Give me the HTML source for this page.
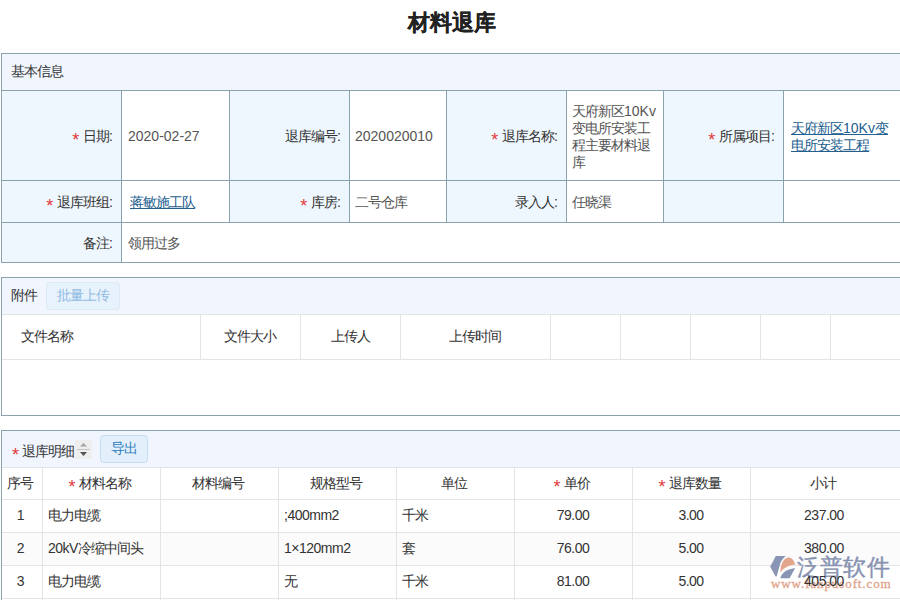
<!DOCTYPE html>
<html><head><meta charset="utf-8">
<style>
*{box-sizing:border-box;margin:0;padding:0}
html,body{width:900px;height:600px;overflow:hidden;background:#fff}
body{font-family:"Liberation Sans",sans-serif;font-size:14px;letter-spacing:-1px;color:#333;position:relative}
.title{position:absolute;left:1px;width:902px;top:8px;text-align:center;font-size:22px;letter-spacing:0;font-weight:bold;color:#222;line-height:30px;-webkit-text-stroke:0.2px #222}
.t{position:absolute;white-space:nowrap;line-height:17px}
.r{color:#e2393b;letter-spacing:0;font-size:18px;line-height:0;position:relative;top:5px;margin-right:1px}
.l{font-size:14px;letter-spacing:0}
.v{color:#555}
.tb{z-index:2}
.tb .l{font-size:14px;letter-spacing:-0.5px}
.lnk{color:#236090;text-decoration:underline}
.btn{position:absolute;border:1px solid #c5ddf1;background:#e3effb;color:#2d7dc0;border-radius:4px;text-align:center;line-height:24px}
.btn.dis{border-color:#d9e9f6;background:#e8f2fc;color:#92bde3}
.sort{position:absolute;background:#eeeeee}
.wm1{position:absolute;left:797px;top:551px;font-size:23px;line-height:32px;letter-spacing:0.2px;color:#8792b1;-webkit-text-stroke:0.4px #8792b1}
.wm2{position:absolute;left:771px;top:576px;font-family:"Liberation Serif",serif;font-size:13px;letter-spacing:0.9px;line-height:16px;color:#e0a38b;-webkit-text-stroke:0.3px #e0a38b}
</style></head><body>
<div class="title">材料退库</div>
<div style="position:absolute;left:1px;top:53px;width:1000px;height:37px;background:#f0f5fe;"></div>
<div style="position:absolute;left:1px;top:53px;width:1000px;height:1px;background:#8aa2ad;"></div>
<div style="position:absolute;left:1px;top:53px;width:1px;height:210px;background:#8aa2ad;"></div>
<div style="position:absolute;left:2px;top:91px;width:119px;height:171px;background:#eff7fe;"></div>
<div style="position:absolute;left:230px;top:91px;width:119px;height:89px;background:#eff7fe;"></div>
<div style="position:absolute;left:230px;top:181px;width:119px;height:41px;background:#eff7fe;"></div>
<div style="position:absolute;left:447px;top:91px;width:119px;height:89px;background:#eff7fe;"></div>
<div style="position:absolute;left:447px;top:181px;width:119px;height:41px;background:#eff7fe;"></div>
<div style="position:absolute;left:664px;top:91px;width:119px;height:89px;background:#eff7fe;"></div>
<div style="position:absolute;left:664px;top:181px;width:119px;height:41px;background:#eff7fe;"></div>
<div style="position:absolute;left:1px;top:90px;width:1000px;height:1px;background:#8aa2ad;"></div>
<div style="position:absolute;left:1px;top:180px;width:1000px;height:1px;background:#8aa2ad;"></div>
<div style="position:absolute;left:1px;top:222px;width:1000px;height:1px;background:#8aa2ad;"></div>
<div style="position:absolute;left:1px;top:262px;width:1000px;height:1px;background:#8aa2ad;"></div>
<div style="position:absolute;left:121px;top:90px;width:1px;height:172px;background:#8aa2ad;"></div>
<div style="position:absolute;left:229px;top:90px;width:1px;height:132px;background:#8aa2ad;"></div>
<div style="position:absolute;left:349px;top:90px;width:1px;height:132px;background:#8aa2ad;"></div>
<div style="position:absolute;left:446px;top:90px;width:1px;height:132px;background:#8aa2ad;"></div>
<div style="position:absolute;left:566px;top:90px;width:1px;height:132px;background:#8aa2ad;"></div>
<div style="position:absolute;left:663px;top:90px;width:1px;height:132px;background:#8aa2ad;"></div>
<div style="position:absolute;left:783px;top:90px;width:1px;height:132px;background:#8aa2ad;"></div>
<div class="t " style="left:11px;top:63px;">基本信息</div>
<div class="t " style="left:0px;top:128px;width:113px;text-align:right"><span class="r">*</span> 日期<span class="l">:</span></div>
<div class="t v" style="left:128px;top:128px;"><span class="l">2020-02-27</span></div>
<div class="t " style="left:229px;top:128px;width:112px;text-align:right">退库编号<span class="l">:</span></div>
<div class="t v" style="left:355px;top:128px;"><span class="l">2020020010</span></div>
<div class="t " style="left:446px;top:128px;width:112px;text-align:right"><span class="r">*</span> 退库名称<span class="l">:</span></div>
<div class="t v" style="left:572px;top:103px;line-height:17.1px">天府新区<span class="l">10Kv</span><br>变电所安装工<br>程主要材料退<br>库</div>
<div class="t " style="left:663px;top:128px;width:112px;text-align:right"><span class="r">*</span> 所属项目<span class="l">:</span></div>
<div class="t lnk" style="left:791px;top:120px;line-height:17px">天府新区<span class="l">10Kv</span>变<br>电所安装工程</div>
<div class="t " style="left:0px;top:194px;width:113px;text-align:right"><span class="r">*</span> 退库班组<span class="l">:</span></div>
<div class="t lnk" style="left:130px;top:194px;">蒋敏施工队</div>
<div class="t " style="left:229px;top:194px;width:112px;text-align:right"><span class="r">*</span> 库房<span class="l">:</span></div>
<div class="t v" style="left:355px;top:194px;">二号仓库</div>
<div class="t " style="left:446px;top:194px;width:112px;text-align:right">录入人<span class="l">:</span></div>
<div class="t v" style="left:572px;top:194px;">任晓渠</div>
<div class="t " style="left:0px;top:235px;width:113px;text-align:right">备注<span class="l">:</span></div>
<div class="t v" style="left:128px;top:235px;">领用过多</div>
<div style="position:absolute;left:1px;top:277px;width:1000px;height:37px;background:#f0f5fe;"></div>
<div style="position:absolute;left:1px;top:277px;width:1000px;height:1px;background:#8aa2ad;"></div>
<div style="position:absolute;left:1px;top:277px;width:1px;height:139px;background:#8aa2ad;"></div>
<div style="position:absolute;left:1px;top:415px;width:1000px;height:1px;background:#8aa2ad;"></div>
<div style="position:absolute;left:2px;top:314px;width:1000px;height:1px;background:#e4e4e4;"></div>
<div style="position:absolute;left:2px;top:359px;width:1000px;height:1px;background:#e4e4e4;"></div>
<div style="position:absolute;left:200px;top:314px;width:1px;height:45px;background:#e4e4e4;"></div>
<div style="position:absolute;left:300px;top:314px;width:1px;height:45px;background:#e4e4e4;"></div>
<div style="position:absolute;left:400px;top:314px;width:1px;height:45px;background:#e4e4e4;"></div>
<div style="position:absolute;left:550px;top:314px;width:1px;height:45px;background:#e4e4e4;"></div>
<div style="position:absolute;left:620px;top:314px;width:1px;height:45px;background:#e4e4e4;"></div>
<div style="position:absolute;left:690px;top:314px;width:1px;height:45px;background:#e4e4e4;"></div>
<div style="position:absolute;left:760px;top:314px;width:1px;height:45px;background:#e4e4e4;"></div>
<div style="position:absolute;left:830px;top:314px;width:1px;height:45px;background:#e4e4e4;"></div>
<div class="t " style="left:11px;top:287px;">附件</div>
<div class="btn dis" style="left:46px;top:282px;width:74px;height:28px">批量上传</div>
<div class="t " style="left:21px;top:328px;">文件名称</div>
<div class="t " style="left:200px;top:328px;width:100px;text-align:center">文件大小</div>
<div class="t " style="left:300px;top:328px;width:100px;text-align:center">上传人</div>
<div class="t " style="left:400px;top:328px;width:150px;text-align:center">上传时间</div>
<div style="position:absolute;left:1px;top:430px;width:1000px;height:37px;background:#f0f5fe;"></div>
<div style="position:absolute;left:1px;top:430px;width:1000px;height:1px;background:#8aa2ad;"></div>
<div style="position:absolute;left:1px;top:430px;width:1px;height:200px;background:#8aa2ad;"></div>
<div style="position:absolute;left:2px;top:533px;width:1000px;height:32px;background:#fbfbfb;"></div>
<div style="position:absolute;left:2px;top:467px;width:1000px;height:1px;background:#e4e4e4;"></div>
<div style="position:absolute;left:2px;top:499px;width:1000px;height:1px;background:#e4e4e4;"></div>
<div style="position:absolute;left:2px;top:532px;width:1000px;height:1px;background:#e4e4e4;"></div>
<div style="position:absolute;left:2px;top:565px;width:1000px;height:1px;background:#e4e4e4;"></div>
<div style="position:absolute;left:2px;top:598px;width:1000px;height:1px;background:#e4e4e4;"></div>
<div style="position:absolute;left:42px;top:467px;width:1px;height:140px;background:#e4e4e4;"></div>
<div style="position:absolute;left:160px;top:467px;width:1px;height:140px;background:#e4e4e4;"></div>
<div style="position:absolute;left:278px;top:467px;width:1px;height:140px;background:#e4e4e4;"></div>
<div style="position:absolute;left:396px;top:467px;width:1px;height:140px;background:#e4e4e4;"></div>
<div style="position:absolute;left:514px;top:467px;width:1px;height:140px;background:#e4e4e4;"></div>
<div style="position:absolute;left:632px;top:467px;width:1px;height:140px;background:#e4e4e4;"></div>
<div style="position:absolute;left:750px;top:467px;width:1px;height:140px;background:#e4e4e4;"></div>
<div class="t " style="left:12px;top:443px;"><span class="r" style="margin-right:0">*</span> 退库明细</div>
<div class="sort" style="left:75px;top:440px;width:17px;height:19px">
<svg width="17" height="19" viewBox="0 0 17 19" style="position:absolute;left:0;top:0">
<path d="M5 6.6 L8.5 2.9 L12 6.6 Z" fill="#a3a3a3"/>
<rect x="2" y="9" width="13" height="1" fill="#c4c4c4"/>
<path d="M5 12.1 L12 12.1 L8.5 15.9 Z" fill="#555"/>
</svg></div>
<div class="btn" style="left:100px;top:435px;width:48px;height:28px">导出</div>
<div class="t " style="left:-1px;top:475px;width:41px;text-align:center">序号</div>
<div class="t " style="left:41px;top:475px;width:118px;text-align:center"><span class="r">*</span> 材料名称</div>
<div class="t " style="left:159px;top:475px;width:118px;text-align:center">材料编号</div>
<div class="t " style="left:277px;top:475px;width:118px;text-align:center">规格型号</div>
<div class="t " style="left:395px;top:475px;width:118px;text-align:center">单位</div>
<div class="t " style="left:513px;top:475px;width:118px;text-align:center"><span class="r">*</span> 单价</div>
<div class="t " style="left:631px;top:475px;width:118px;text-align:center"><span class="r">*</span> 退库数量</div>
<div class="t " style="left:749px;top:475px;width:148px;text-align:center">小计</div>
<div class="t tb" style="left:0px;top:507px;width:41px;text-align:center"><span class="l">1</span></div>
<div class="t tb" style="left:48px;top:507px;">电力电缆</div>
<div class="t tb" style="left:284px;top:507px;"><span class="l">;400mm2</span></div>
<div class="t tb" style="left:402px;top:507px;">千米</div>
<div class="t tb" style="left:514px;top:507px;width:118px;text-align:center"><span class="l">79.00</span></div>
<div class="t tb" style="left:632px;top:507px;width:118px;text-align:center"><span class="l">3.00</span></div>
<div class="t tb" style="left:750px;top:507px;width:148px;text-align:center"><span class="l">237.00</span></div>
<div class="t tb" style="left:0px;top:540px;width:41px;text-align:center"><span class="l">2</span></div>
<div class="t tb" style="left:48px;top:540px;"><span class="l">20kV</span>冷缩中间头</div>
<div class="t tb" style="left:284px;top:540px;"><span class="l">1×120mm2</span></div>
<div class="t tb" style="left:402px;top:540px;">套</div>
<div class="t tb" style="left:514px;top:540px;width:118px;text-align:center"><span class="l">76.00</span></div>
<div class="t tb" style="left:632px;top:540px;width:118px;text-align:center"><span class="l">5.00</span></div>
<div class="t tb" style="left:750px;top:540px;width:148px;text-align:center"><span class="l">380.00</span></div>
<div class="t tb" style="left:0px;top:573px;width:41px;text-align:center"><span class="l">3</span></div>
<div class="t tb" style="left:48px;top:573px;">电力电缆</div>
<div class="t tb" style="left:284px;top:573px;">无</div>
<div class="t tb" style="left:402px;top:573px;">千米</div>
<div class="t tb" style="left:514px;top:573px;width:118px;text-align:center"><span class="l">81.00</span></div>
<div class="t tb" style="left:632px;top:573px;width:118px;text-align:center"><span class="l">5.00</span></div>
<div class="t tb" style="left:750px;top:573px;width:148px;text-align:center"><span class="l">405.00</span></div>
<svg width="40" height="30" viewBox="0 0 40 30" style="position:absolute;left:765px;top:550px">
<path d="M5.2 16.8 L10.8 6 L20.8 6 C17.2 8.5 15 12.5 14.3 17 L11.6 26.5 L10.6 26.5 Z" fill="#8a95b5"/>
<path d="M15.5 22.5 C15.3 15 18 8.3 23.8 7.2 C27.3 8 29.6 11.2 30.2 14.6 C24 15.2 18.5 17.8 15.5 22.5 Z" fill="#e2a68c"/>
<path d="M15.2 28.3 C16.8 23.2 20.5 19.6 30.2 18 L24.6 28.3 Z" fill="#8a95b5"/>
</svg>
<div class="wm1">泛普软件</div>
<div class="wm2">www.fanpusoft.com</div>
</body></html>
